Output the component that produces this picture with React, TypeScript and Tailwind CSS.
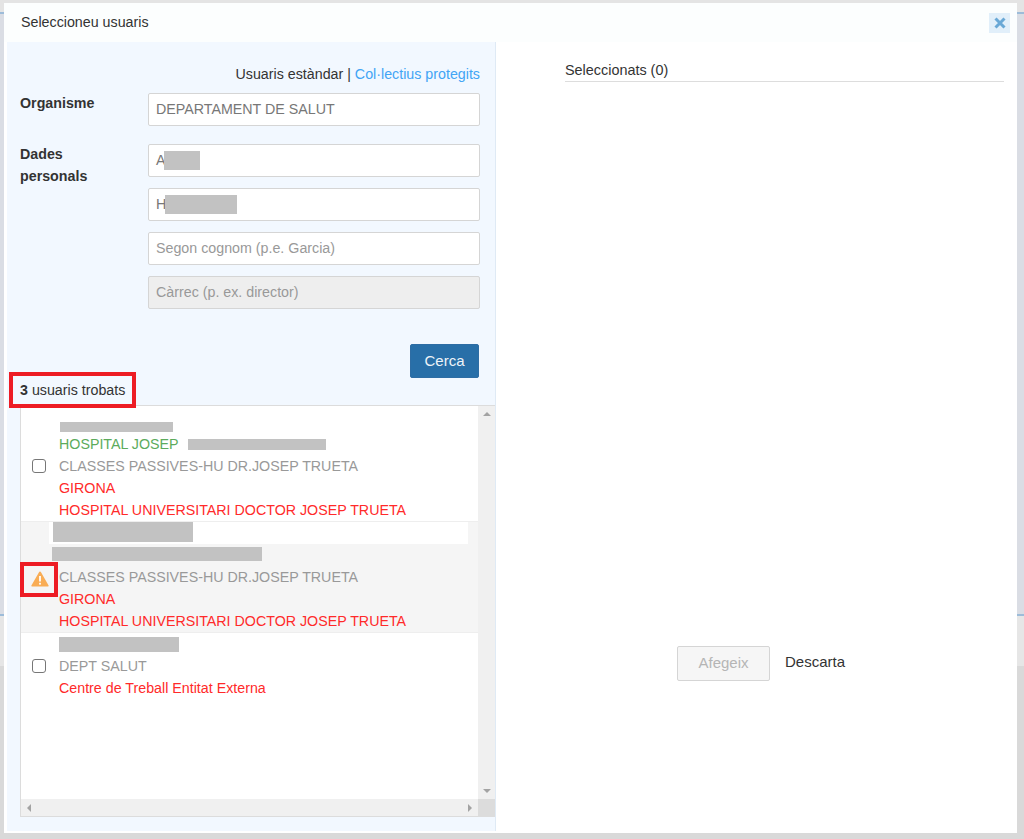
const fields = [
  { value: "A", blur: "w-[36px] ml-[-2px]" },
  { value: "H", blur: "w-[72px] ml-[-1px]" },
];

function Blur({ className }: { className: string }) {
  return <span className={`inline-block bg-[#c2c2c2] ${className}`} />;
}

function WarningIcon() {
  return (
    <svg width="18" height="16" viewBox="0 0 18 16">
      <path d="M9 0.5 Q9.7 0.5 10 1.2 L17.6 14.4 Q18 15.5 16.9 15.5 L1.1 15.5 Q0 15.5 0.4 14.4 L8 1.2 Q8.3 0.5 9 0.5 Z" fill="#f9ad55" />
      <rect x="8.1" y="5" width="1.8" height="5.5" fill="#fff" />
      <rect x="8.1" y="11.8" width="1.8" height="1.8" fill="#fff" />
    </svg>
  );
}

function Checkbox() {
  return <input type="checkbox" className="h-[14px] w-[14px] appearance-none rounded-[3px] border border-[#777] bg-white" />;
}

export default function App() {
  return (
    <div className="relative h-[839px] w-[1024px] overflow-hidden bg-[#d9d9d9] font-['Liberation_Sans',Arial,sans-serif] text-[14.25px] text-[#333]">
      {/* pàgina de darrere */}
      <div className="h-[12px] bg-[#e4e4e4]" />
      <div className="h-[2px] bg-[#9dbcd9]" />
      <div className="h-[600px] bg-[#dadde4]" />
      <div className="h-[2px] bg-[#9dbcd9]" />
      <div className="h-[50px] bg-[#e6e6e6]" />

      <div className="absolute top-[3px] left-[4px] flex h-[830px] w-[1013px] flex-col bg-white">
        {/* capçalera */}
        <div className="flex h-[39px] shrink-0 items-center justify-between bg-[#fcfefe] pl-[17px] pr-[7px]">
          <span className="pt-[1px]">Seleccioneu usuaris</span>
          <button className="flex h-[20px] w-[21px] items-center justify-center bg-[#e1effa]">
            <svg width="12" height="12" viewBox="0 0 12 12">
              <path d="M1.5 1.5 L10.5 10.5 M10.5 1.5 L1.5 10.5" stroke="#69a8d6" strokeWidth="3" />
            </svg>
          </button>
        </div>

        <div className="flex min-h-0 flex-1">
          {/* panell esquerre */}
          <div className="ml-[3px] flex h-[789px] w-[489px] shrink-0 flex-col border-r border-[#dfeaf5] bg-[#f2f8ff] pl-[13px]">
            <div className="mt-[24px] pr-[15px] text-right leading-[16px]">
              Usuaris estàndar | <span className="text-[#42a5f5]">Col·lectius protegits</span>
            </div>

            <div className="mt-[11px] flex">
              <label className="mt-[-1px] w-[128px] leading-[22px] font-bold">Organisme</label>
              <div className="flex h-[33px] w-[332px] items-center rounded-[2px] border border-[#d5d5d5] bg-white px-[7px] text-[#777]">
                DEPARTAMENT DE SALUT
              </div>
            </div>

            <div className="mt-[18px] flex">
              <label className="mt-[-1px] w-[128px] leading-[22px] font-bold">
                Dades
                <br />
                personals
              </label>
              <div className="flex w-[332px] flex-col gap-[11px]">
                {fields.map((f) => (
                  <div
                    key={f.value}
                    className="flex h-[33px] items-center rounded-[2px] border border-[#d5d5d5] bg-white px-[7px] text-[#777]"
                  >
                    {f.value}
                    <Blur className={`h-[19px] ${f.blur}`} />
                  </div>
                ))}
                <div className="flex h-[33px] items-center rounded-[2px] border border-[#d5d5d5] bg-white px-[7px] text-[#999]">
                  Segon cognom (p.e. Garcia)
                </div>
                <div className="flex h-[33px] items-center rounded-[2px] border border-[#d5d5d5] bg-[#eeeeee] px-[7px] text-[#999]">
                  Càrrec (p. ex. director)
                </div>
              </div>
            </div>

            <div className="mt-[35px] flex justify-end pr-[16px]">
              <button className="h-[34px] w-[69px] rounded-[2px] border border-[#2e6da4] bg-[#286fa8] text-[15px] text-[#eef4f9]">
                Cerca
              </button>
            </div>

            <div className="relative h-[27px] leading-[24px]">
              <b>3</b> usuaris trobats
              <div className="absolute top-[-6px] left-[-11px] h-[36px] w-[127px] border-[4px] border-[#ed1c24]" />
            </div>

            {/* llista de resultats */}
            <div className="flex h-[412px] w-[475px] flex-col border-t border-b border-l border-[#dcdcdc] bg-white">
              <div className="flex min-h-0 flex-1">
                <div className="min-w-0 flex-1 leading-[22px]">
                  <div className="flex h-[116px] items-start border-b border-[#eeeeee] pt-[5px]">
                    <div className="flex w-[38px] justify-center pt-[48px] pr-[2px]">
                      <Checkbox />
                    </div>
                    <div>
                      <div className="flex h-[22px] items-end pb-[1px] pl-[1px]">
                        <Blur className="h-[10px] w-[113px]" />
                      </div>
                      <div className="flex items-center text-[#5cab5c]">
                        HOSPITAL JOSEP
                        <Blur className="ml-[9px] h-[11px] w-[138px]" />
                      </div>
                      <div className="text-[#999]">CLASSES PASSIVES-HU DR.JOSEP TRUETA</div>
                      <div className="text-[#ff2a2a]">GIRONA</div>
                      <div className="text-[#ff2a2a]">HOSPITAL UNIVERSITARI DOCTOR JOSEP TRUETA</div>
                    </div>
                  </div>

                  <div className="relative flex h-[111px] items-end border-b border-[#eeeeee] bg-[#f5f5f5]">
                    <div className="absolute top-0 left-[28px] flex h-[22px] w-[419px] items-start bg-white pl-[4px]">
                      <Blur className="h-[20px] w-[140px]" />
                    </div>
                    <Blur className="absolute top-[25px] left-[31px] h-[14px] w-[210px]" />
                    <div className="flex h-[66px] w-[38px] justify-center pt-[5px]">
                      <WarningIcon />
                    </div>
                    <div>
                      <div className="text-[#999]">CLASSES PASSIVES-HU DR.JOSEP TRUETA</div>
                      <div className="text-[#ff2a2a]">GIRONA</div>
                      <div className="text-[#ff2a2a]">HOSPITAL UNIVERSITARI DOCTOR JOSEP TRUETA</div>
                    </div>
                    <div className="absolute top-[40px] left-[-1px] h-[35px] w-[38px] border-[4px] border-[#ed1c24]" />
                  </div>

                  <div className="flex h-[68px] items-start">
                    <div className="flex w-[38px] justify-center pt-[26px] pr-[2px]">
                      <Checkbox />
                    </div>
                    <div>
                      <div className="flex h-[22px] items-center">
                        <Blur className="h-[15px] w-[120px]" />
                      </div>
                      <div className="text-[#999]">DEPT SALUT</div>
                      <div className="text-[#ff2a2a]">Centre de Treball Entitat Externa</div>
                    </div>
                  </div>
                </div>
                {/* barra vertical */}
                <div className="flex w-[17px] shrink-0 flex-col items-center justify-between bg-[#f0f0f0] py-[6px]">
                  <span className="h-0 w-0 border-x-[4px] border-b-[4px] border-x-transparent border-b-[#a3a3a3]" />
                  <span className="h-0 w-0 border-x-[4px] border-t-[4px] border-x-transparent border-t-[#a3a3a3]" />
                </div>
              </div>
              {/* barra horitzontal */}
              <div className="flex h-[17px] shrink-0">
                <div className="flex flex-1 items-center justify-between bg-[#f0f0f0] px-[6px]">
                  <span className="h-0 w-0 border-y-[4px] border-r-[4px] border-y-transparent border-r-[#a3a3a3]" />
                  <span className="h-0 w-0 border-y-[4px] border-l-[4px] border-y-transparent border-l-[#a3a3a3]" />
                </div>
                <div className="w-[17px] bg-[#dcdcdc]" />
              </div>
            </div>
          </div>

          {/* panell dret */}
          <div className="flex flex-1 flex-col pr-[13px] pl-[69px]">
            <div className="mt-[20px] border-b border-[#dddddd] pb-[2px] text-[14.4px] leading-[17px]">
              Seleccionats (0)
            </div>
            <div className="mt-[564px] flex items-start pl-[112px]">
              <button className="h-[35px] w-[93px] rounded-[2px] border border-[#d5d5d5] bg-[#f6f6f6] text-[15px] text-[#b5b5b5]">
                Afegeix
              </button>
              <span className="ml-[15px] pt-[7px] text-[15px] leading-[17px]">Descarta</span>
            </div>
          </div>
        </div>
      </div>
    </div>
  );
}
